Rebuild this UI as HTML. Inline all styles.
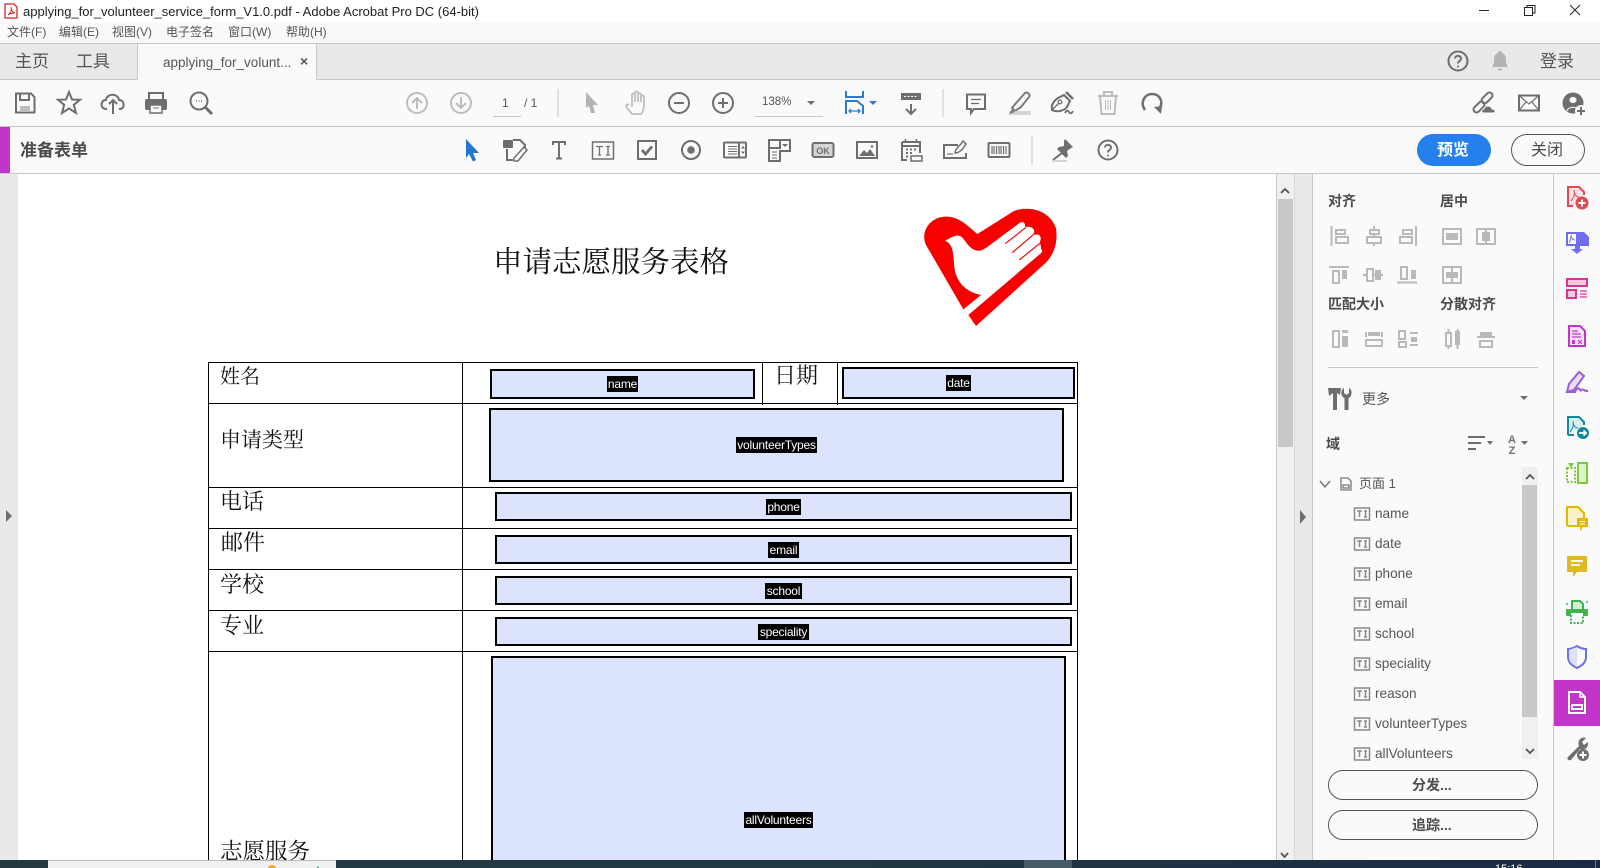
<!DOCTYPE html>
<html lang="zh"><head><meta charset="utf-8"><title>Acrobat</title>
<style>
html,body{margin:0;padding:0;width:1600px;height:868px;overflow:hidden;background:#fff}
body{position:relative;font-family:"Liberation Sans","Noto Sans CJK SC",sans-serif;color:#4b4b4b}
.b{position:absolute;box-sizing:border-box}
.t{position:absolute;white-space:nowrap;line-height:1}
.l{position:absolute;background:#000}
.f{position:absolute;box-sizing:border-box;border:2px solid #000;background:#dce3fd}
.g{position:absolute;background:#000;color:#fff;font-size:12px;line-height:16px;height:16px;overflow:hidden;text-align:center;font-family:"Liberation Sans",sans-serif;letter-spacing:-.2px}
.c{position:absolute;white-space:nowrap;line-height:1;font-family:"Liberation Serif","Noto Serif CJK SC",serif;color:#111;font-size:21px}
.m{font-size:12px;top:26px;color:#555}
.h{font-size:14px;font-weight:700;color:#4b4b4b}
.i{font-size:13.6px;color:#555;left:1375px}
svg{position:absolute;left:0;top:0}
</style></head><body>
<div class="b" style="left:0;top:0;width:1600px;height:23px;background:#fff"></div>
<div class="b" style="left:0;top:23px;width:1600px;height:20px;background:#f9f9f9"></div>
<div class="b" style="left:0;top:43px;width:1600px;height:37px;background:#e9e9e9;border-top:1px solid #c8c8c8;border-bottom:1px solid #c8c8c8"></div>
<div class="b" style="left:137px;top:43px;width:180px;height:37px;background:#fafafa;border:1px solid #c8c8c8;border-bottom:none"></div>
<div class="b" style="left:0;top:80px;width:1600px;height:47px;background:#fafafa;border-bottom:1px solid #c8c8c8"></div>
<div class="b" style="left:0;top:127px;width:1600px;height:47px;background:#fafafa;border-bottom:1px solid #c8c8c8"></div>
<div class="b" style="left:0;top:127px;width:10px;height:46px;background:#c136c9"></div>

<div class="b" style="left:0;top:174px;width:18px;height:686px;background:#e9e9e9"></div>
<div class="b" style="left:1276px;top:174px;width:19px;height:686px;background:#f0f0f0;border-left:1px solid #c8c8c8"></div>
<div class="b" style="left:1278px;top:199px;width:15px;height:248px;background:#c8c8c8"></div>
<div class="b" style="left:1294px;top:174px;width:18px;height:686px;background:#e9e9e9;border-left:1px solid #d8d8d8"></div>
<div class="b" style="left:1312px;top:174px;width:242px;height:686px;background:#fafafa;border-left:1px solid #c8c8c8;border-right:1px solid #c8c8c8"></div>
<div class="b" style="left:1554px;top:174px;width:46px;height:686px;background:#fafafa"></div>
<div class="b" style="left:1554px;top:680px;width:46px;height:46px;background:#c136c9"></div>
<div class="b" style="left:1328px;top:367px;width:210px;height:1px;background:#c8c8c8"></div>
<div class="b" style="left:1522px;top:467px;width:16px;height:292px;background:#f0f0f0"></div>
<div class="b" style="left:1522px;top:485px;width:15px;height:232px;background:#c8c8c8"></div>
<div class="b" style="left:1417px;top:134px;width:74px;height:32px;background:#2680eb;border-radius:16px"></div>
<div class="b" style="left:1511px;top:134px;width:74px;height:32px;background:#fafafa;border:1.5px solid #555;border-radius:16px"></div>
<div class="b" style="left:1328px;top:770px;width:210px;height:30px;border:1.5px solid #555;border-radius:15px"></div>
<div class="b" style="left:1328px;top:810px;width:210px;height:30px;border:1.5px solid #555;border-radius:15px"></div>

<!-- title text -->
<div class="t" style="left:23px;top:5px;font-size:13px;color:#222">applying_for_volunteer_service_form_V1.0.pdf - Adobe Acrobat Pro DC (64-bit)</div>
<div class="t m" style="left:7px">文件(F)</div>
<div class="t m" style="left:59px">编辑(E)</div>
<div class="t m" style="left:112px">视图(V)</div>
<div class="t m" style="left:166px">电子签名</div>
<div class="t m" style="left:228px">窗口(W)</div>
<div class="t m" style="left:286px">帮助(H)</div>
<div class="t" style="left:15px;top:53px;font-size:17px;color:#555">主页</div>
<div class="t" style="left:76px;top:53px;font-size:17px;color:#555">工具</div>
<div class="t" style="left:163px;top:56px;font-size:13.5px;color:#555">applying_for_volunt...</div>
<div class="t" style="left:300px;top:54px;font-size:14px;font-weight:700;color:#555">×</div>
<div class="t" style="left:1540px;top:53px;font-size:17px;color:#555">登录</div>
<div class="t" style="left:502px;top:97px;font-size:12px;color:#555">1</div>
<div class="t" style="left:524px;top:97px;font-size:12px;color:#555">/ 1</div>
<div class="b" style="left:493px;top:116px;width:28px;height:1px;background:#c8c8c8"></div>
<div class="t" style="left:762px;top:97px;font-size:11.5px;color:#555">138%</div>
<div class="b" style="left:755px;top:116px;width:68px;height:1px;background:#c8c8c8"></div>
<div class="t" style="left:20px;top:142px;font-size:17px;font-weight:700;color:#4b4b4b">准备表单</div>
<div class="t" style="left:1437px;top:143px;font-size:16px;font-weight:700;color:#fff">预览</div>
<div class="t" style="left:1531px;top:143px;font-size:16px;color:#4b4b4b">关闭</div>

<!-- document -->
<div class="c" style="left:493px;top:249px;font-size:29.5px;color:#111">申请志愿服务表格</div>
<div class="l" style="left:208px;top:362px;width:870px;height:1px"></div>
<div class="l" style="left:208px;top:403px;width:870px;height:1px"></div>
<div class="l" style="left:208px;top:487px;width:870px;height:1px"></div>
<div class="l" style="left:208px;top:528px;width:870px;height:1px"></div>
<div class="l" style="left:208px;top:569px;width:870px;height:1px"></div>
<div class="l" style="left:208px;top:610px;width:870px;height:1px"></div>
<div class="l" style="left:208px;top:651px;width:870px;height:1px"></div>
<div class="l" style="left:208px;top:362px;width:1px;height:498px"></div>
<div class="l" style="left:462px;top:362px;width:1px;height:498px"></div>
<div class="l" style="left:762px;top:362px;width:1px;height:43px"></div>
<div class="l" style="left:837px;top:362px;width:1px;height:43px"></div>
<div class="l" style="left:1077px;top:362px;width:1px;height:498px"></div>

<div class="c" style="left:220px;top:367px;font-size:20px">姓名</div>
<div class="c" style="left:220px;top:430px">申请类型</div>
<div class="c" style="left:220px;top:491px;font-size:22px">电话</div>
<div class="c" style="left:221px;top:532px;font-size:22px">邮件</div>
<div class="c" style="left:220px;top:574px;font-size:22px">学校</div>
<div class="c" style="left:220px;top:615px;font-size:22px">专业</div>
<div class="c" style="left:774px;top:365px;font-size:22px">日期</div>
<div style="position:absolute;left:0;top:800px;width:400px;height:60px;overflow:hidden"><div class="c" style="left:220px;top:41px;font-size:22.5px">志愿服务</div></div>

<div class="f" style="left:490px;top:369px;width:265px;height:30px"></div>
<div class="f" style="left:842px;top:367px;width:233px;height:32px"></div>
<div class="f" style="left:489px;top:408px;width:575px;height:74px"></div>
<div class="f" style="left:495px;top:492px;width:577px;height:29px"></div>
<div class="f" style="left:495px;top:535px;width:577px;height:29px"></div>
<div class="f" style="left:495px;top:576px;width:577px;height:29px"></div>
<div class="f" style="left:495px;top:617px;width:577px;height:29px"></div>
<div class="b" style="left:491px;top:656px;width:575px;height:204px;border:2px solid #000;border-bottom:none;background:#dce3fd"></div>
<div class="g" style="left:607px;top:376px;width:31px">name</div>
<div class="g" style="left:946px;top:375px;width:25px">date</div>
<div class="g" style="left:736px;top:437px;width:81px">volunteerTypes</div>
<div class="g" style="left:766px;top:499px;width:35px">phone</div>
<div class="g" style="left:768px;top:542px;width:31px">email</div>
<div class="g" style="left:765px;top:583px;width:37px">school</div>
<div class="g" style="left:758px;top:624px;width:51px">speciality</div>
<div class="g" style="left:744px;top:812px;width:69px">allVolunteers</div>

<!-- right panel text -->
<div class="t h" style="left:1328px;top:194px">对齐</div>
<div class="t h" style="left:1440px;top:194px">居中</div>
<div class="t h" style="left:1328px;top:297px">匹配大小</div>
<div class="t h" style="left:1440px;top:297px">分散对齐</div>
<div class="t" style="left:1362px;top:392px;font-size:14px;color:#555">更多</div>
<div class="t h" style="left:1326px;top:437px">域</div>
<div class="t" style="left:1359px;top:477px;font-size:13px;color:#555">页面 1</div>
<div class="t i" style="top:507px">name</div>
<div class="t i" style="top:537px">date</div>
<div class="t i" style="top:567px">phone</div>
<div class="t i" style="top:597px">email</div>
<div class="t i" style="top:627px">school</div>
<div class="t i" style="top:657px">speciality</div>
<div class="t i" style="top:687px">reason</div>
<div class="t i" style="top:717px">volunteerTypes</div>
<div class="t i" style="top:747px">allVolunteers</div>
<div class="t" style="left:1412px;top:778px;font-size:14px;font-weight:700;color:#4b4b4b">分发...</div>
<div class="t" style="left:1412px;top:818px;font-size:14px;font-weight:700;color:#4b4b4b">追踪...</div>

<svg width="1600" height="868" viewBox="0 0 1600 868" fill="none">
<!-- app icon -->
<g transform="translate(11,11)"><path d="M-6 -7H3L6 -4V7H-6Z" stroke="#d8232a" stroke-width="1.3" fill="#fff"/><path d="M-3 4C0 1 1 -1 0 -4C0 -1 2 2 4 2C2 2 -1 2 -3 4Z" stroke="#d8232a" stroke-width="1"/></g>
<!-- window -->
<path d="M1479 10.500H1489" stroke="#222"/>
<path d="M1524.500 7.500H1532.500V15.500H1524.500ZM1527 7V5.500H1535V13H1533" stroke="#222"/>
<path d="M1570 5L1580 15M1580 5L1570 15" stroke="#222"/>
<!-- tab row -->
<g transform="translate(1458,61)" stroke="#6e6e6e"><circle r="9.500" stroke-width="2"/><path d="M-3 -2.500C-3 -6 3 -6 3 -2.500C3 0 0 0 0 2.500" stroke-width="2"/><circle cy="5.500" r="1" fill="#6e6e6e" stroke="none"/></g>
<g transform="translate(1500,61)" fill="#b4b4b4"><path d="M-8 6C-6 3 -6 1 -6 -2C-6 -6 -3 -8 -1.500 -8.500C-1.500 -11 1.500 -11 1.500 -8.500C3 -8 6 -6 6 -2C6 1 6 3 8 6Z"/><path d="M-2.500 7.500H2.500C2 10.500 -2 10.500 -2.500 7.500Z"/></g>

<!-- toolbar 1 -->
<g stroke="#6e6e6e" stroke-width="2">
<g transform="translate(25,103)"><path d="M-9 -9.500H6L9.500 -6V9.500H-9Z"/><path d="M-5 -9.500V-3H4V-9.500"/><rect x="-5" y="3" width="10" height="6" fill="#bdbdbd" stroke="none"/></g>
<g transform="translate(69,103)"><path d="M0 -11L3 -3.500L11 -3.200L4.800 1.800L7 10L0 5.500L-7 10L-4.800 1.800L-11 -3.200L-3 -3.500Z"/></g>
<g transform="translate(113,103)"><path d="M-6 6H-7C-13 6 -13 -3 -7 -3C-6 -10 5 -10 6 -3C12 -3 12 6 7 6H6"/><path d="M0 11V-3M-4 1L0 -3L4 1"/></g>
<g transform="translate(156,103)"><path d="M-7 -4V-10H7V-4"/><rect x="-11" y="-4" width="22" height="11" rx="2" fill="#6e6e6e" stroke="none"/><rect x="-6" y="2" width="12" height="8" fill="#fafafa" stroke-width="1.500"/><path d="M-3 5H3" stroke-width="1"/></g>
<g transform="translate(201,103)"><circle cx="-2" cy="-2" r="8.500"/><path d="M4 4L11 11" stroke-width="3"/><path d="M-5 -2H-4M-2.500 -2H-1.500M0 -2H1" stroke-width="1.500"/></g>
<g transform="translate(679,103)"><circle r="10"/><path d="M-5 0H5"/></g>
<g transform="translate(723,103)"><circle r="10"/><path d="M-5 0H5M0 -5V5"/></g>
<path d="M911 104V114M906 109L911 114L916 109"/>
<rect x="901" y="93" width="20" height="7" fill="#6e6e6e" stroke="none"/>
<path d="M904 96.500H918" stroke="#fafafa" stroke-width="1" stroke-dasharray="2 1.500"/>
<g transform="translate(976,103)"><path d="M-9 -8.500H9V6H-2L-5 10V6H-9Z"/><path d="M-5 -3.500H5M-5 .500H3" stroke-width="1.300"/></g>
<g transform="translate(1062,103)"><path d="M-10 7C-11 1 -7 -3 -4 -5L2 -8L8 -2L5 4C3 7 -4 10 -10 7Z"/><path d="M-10 7L-3 0" stroke-width="1.300"/><circle cx="-2" cy="-1" r="1.800" stroke-width="1.300"/><path d="M4 -11L11 -4" stroke-width="2.500"/><path d="M3 10Q5 6 7 9T11 8" stroke-width="1.800"/></g>
<g transform="translate(1152,103)"><path d="M-7 7C-12 0 -8 -9 0 -9C8 -9 12 -1 7 6" stroke-width="2.500"/><path d="M2 4L10 3L9 11Z" fill="#6e6e6e" stroke="none"/></g>
<g transform="translate(1485,103)"><rect x="-6.500" y="-3" width="13" height="6" rx="3" transform="translate(-6,4) rotate(-45)"/><rect x="-6.500" y="-3" width="13" height="6" rx="3" transform="translate(2,-5) rotate(-45)"/><path d="M-1 10C-4 10 -4 6 -1 6C0 2 6 2 7 6C11 6 11 10 8 10Z" fill="#6e6e6e" stroke="#fafafa" stroke-width="1"/></g>
<g transform="translate(1529,103)"><rect x="-10" y="-7.500" width="20" height="15"/><path d="M-10 -7.500L0 1L10 -7.500M-10 7.500L-3 -1M10 7.500L3 -1" stroke-width="1.200"/></g>
<g transform="translate(1574,103)"><circle cx="-1" r="10.500" fill="#6e6e6e" stroke="none"/><path d="M-4.500 -3C-4.500 -7 2.500 -7 2.500 -3C2.500 1 -4.500 1 -4.500 -3Z" fill="#fafafa" stroke="none"/><path d="M-7 8C-6 3 4 3 5 8" stroke="#fafafa" stroke-width="1" fill="none"/><circle cx="7" cy="8" r="6" fill="#fafafa" stroke="none"/><path d="M3 8H11M7 4V12"/></g>
</g>
<g stroke="#bdbdbd" stroke-width="2">
<g transform="translate(417,103)"><circle r="10"/><path d="M0 6V-5M-5 0L0 -5L5 0"/></g>
<g transform="translate(461,103)"><circle r="10"/><path d="M0 -6V5M-5 0L0 5L5 0"/></g>
<g transform="translate(635,103)"><path d="M-6 2C-8 0 -10 3 -8 5L-3 11H6C9 8 9 4 9 -6C9 -8 6 -8 6 -6V-1M6 -1V-8C6 -10 3 -10 3 -8V-1M3 -1V-10C3 -12 0 -12 0 -10V-1M0 -1V-8C0 -10 -3 -10 -3 -8V4" stroke-width="1.700"/></g>
<g transform="translate(1108,103)"><path d="M-10 -7H10M-4 -7V-11H4V-7"/><path d="M-8 -7L-6.500 11H6.500L8 -7"/><path d="M-2.500 -3V7M0 -3V7M2.500 -3V7" stroke-width="1"/></g>
</g>
<path d="M558 89V117M943 89V117M1032 135V165" stroke="#c8c8c8" stroke-width="1"/>
<path d="M586 92L598 105L593 105L595 113L591 113L589 106L586 108Z" fill="#b4b4b4"/>
<path d="M807 101H815L811 105Z" fill="#6e6e6e"/>
<g transform="translate(854,103)" stroke="#2d7ad6" stroke-width="2"><path d="M-8 -12V-6H9V-12"/><path d="M-8 11V-2H3L9 3V11"/><path d="M-5 8H6M-3 6L-5 8L-3 10M4 6L6 8L4 10" stroke-width="1.300"/></g>
<path d="M869 101H877L873 105Z" fill="#2d7ad6"/>
<g transform="translate(1020,103)"><path d="M-8 5L-3 -1L5 -10C7 -12 11 -8 9 -6L1 4L-5 8Z" stroke="#7a7a7a" stroke-width="2"/><rect x="-11" y="8" width="22" height="4" fill="#d5d5d5"/><path d="M-11 11L-8 6L-5 9Z" fill="#7a7a7a"/></g>

<!-- toolbar 2 -->
<path d="M466 139L479 153L473 153L476 160L473 161.500L469 154L466 158Z" fill="#2176cf"/>
<g stroke="#6e6e6e" stroke-width="2">
<g transform="translate(515,150)"><path d="M-2 -10H5L10 -5V-2"/><rect x="-12" y="-10" width="10" height="8" rx="1" fill="#6e6e6e" stroke="none"/><path d="M-8 -1V10H-2"/><path d="M-1 8L9 -3L12 0L3 11L-1 11Z" stroke-width="1.500"/></g>
<g transform="translate(559,150)"><path d="M-6 -5V-8H6V-5M0 -8V8M-3 8.500H3"/></g>
<g transform="translate(603,150)"><rect x="-10.500" y="-8" width="21" height="17" stroke-width="1.500"/><path d="M-7 -3.500H0M-3.500 -3.500V5M-5 5H-2M3 -3.500H7M5 -3.500V5M3 5H7" stroke-width="1.300"/></g>
<g transform="translate(647,150)"><rect x="-9" y="-9" width="18" height="18"/><path d="M-5 0L-1.500 4L5 -3.500" stroke-width="2.800"/></g>
<g transform="translate(691,150)"><circle r="9"/><circle r="3.800" fill="#6e6e6e" stroke="none"/></g>
<g transform="translate(735,150)"><rect x="-11" y="-7.500" width="22" height="15" rx="1"/><path d="M-7 -3.500H2M-7 -1H2M-7 1.500H2M-7 4H2" stroke-width="1"/><path d="M4 -7V7"/><path d="M6 -1.500L8 -4L10 -1.500ZM6 1.500L8 4L10 1.500Z" fill="#6e6e6e" stroke="none"/></g>
<g transform="translate(779,150)"><path d="M-10 -10H11V1H1V11H-10ZM-10 -2H1V-10"/><path d="M3 -6H9L6 -3Z" fill="#6e6e6e" stroke="none"/><path d="M-7 2H-2M-7 5H-2M-7 8H-2" stroke-width="1"/></g>
<g transform="translate(823,150)"><rect x="-10.500" y="-7" width="21" height="14" rx="2" fill="#d5d5d5"/></g>
<g transform="translate(867,150)"><rect x="-10" y="-8" width="20" height="16"/><path d="M-8 6L-3 0L0 3L3 -1L8 6Z" fill="#6e6e6e" stroke="none"/><path d="M5 -5V-2M3.500 -3.500H6.500" stroke-width="1"/></g>
<g transform="translate(911,150)"><path d="M-9 -8H9V3M-4 10H-9V-8"/><path d="M-9 -4H9"/><path d="M-5.500 -11V-7M5.500 -11V-7" stroke-width="1.500"/><path d="M-5 -0.500H-3M-1 -0.500H1M3 -0.500H5M-5 3H-3M-1 3H1M-5 6.500H-3" stroke-width="2"/><rect x="0" y="6" width="11" height="5" fill="#fafafa" stroke-width="1.500"/></g>
<g transform="translate(955,150)"><path d="M3 -5H-11V8H11V3"/><path d="M-8 4H-2" stroke-width="1.200"/><path d="M0 3C0 -1 4 -4 6 -6L8 -9L11 -6L9 -3C7 0 4 3 0 3Z" stroke-width="1.500"/></g>
<g transform="translate(999,150)"><rect x="-10.500" y="-7" width="21" height="14" rx="1"/><path d="M-7 -4V4M-5 -4V4M-2.500 -4V4M0 -4V4M2 -4V4M4.500 -4V4M7 -4V4" stroke-width="1.200"/></g>
<g transform="translate(1108,150)"><circle r="9.500"/><path d="M-3 -2.500C-3 -6 3 -6 3 -2.500C3 0 0 0 0 2.500"/><circle cy="5.500" r="1" fill="#6e6e6e" stroke="none"/></g>
</g>
<text x="823" y="154" font-family="Liberation Sans" font-size="9" font-weight="700" fill="#6e6e6e" text-anchor="middle">OK</text>
<g transform="translate(1063,150)"><path d="M2 -11L10 -3L8 -2L4 1L5 6L3 8L-6 -1L-4 -3L1 -4L1 -9Z" fill="#6e6e6e"/><path d="M-1 3L-10 10" stroke="#6e6e6e" stroke-width="2"/><rect x="-11" y="10" width="15" height="2" fill="#d5d5d5"/></g>

<!-- align icons -->
<g stroke="#b9b9b9" stroke-width="2" fill="#fafafa">
<path d="M1331.500 226V246" />
<rect x="1336" y="230" width="9" height="4"/><rect x="1336" y="237" width="12" height="6"/>
<path d="M1374 226V246"/>
<rect x="1370" y="230" width="9" height="4"/><rect x="1367" y="237" width="14" height="6"/>
<path d="M1416 226V246"/>
<rect x="1403" y="230" width="9" height="4"/><rect x="1400" y="237" width="12" height="6"/>
<rect x="1443" y="229" width="18" height="15"/><rect x="1446" y="233" width="12" height="7" fill="#b9b9b9" stroke="none"/>
<path d="M1477 229H1495V244H1477ZM1486 229V244"/><rect x="1482" y="232" width="8" height="9" fill="#b9b9b9" stroke="none"/>
<path d="M1329 267H1349"/><rect x="1333" y="271" width="6" height="12"/><rect x="1342" y="270" width="5" height="9" fill="#b9b9b9" stroke="none"/>
<path d="M1363 275H1383"/><rect x="1367" y="269" width="6" height="12"/><rect x="1375" y="270" width="6" height="10" fill="#b9b9b9" stroke="none"/>
<path d="M1397 282.500H1417"/><rect x="1401" y="267" width="6" height="12"/><rect x="1411" y="270" width="5" height="9" fill="#b9b9b9" stroke="none"/>
<path d="M1443 267H1461V283H1443ZM1452 267V283"/><rect x="1446" y="272" width="12" height="6" fill="#b9b9b9" stroke="none"/>
<rect x="1333" y="331" width="6" height="16"/><rect x="1342" y="330" width="6" height="3" fill="#b9b9b9" stroke="none"/><rect x="1342" y="336" width="6" height="11" fill="#b9b9b9" stroke="none"/>
<path d="M1366 332V337M1382 332V337"/><rect x="1368" y="332" width="12" height="4" fill="#b9b9b9" stroke="none"/><rect x="1366" y="340" width="16" height="6"/>
<path d="M1399 331H1405V339H1399ZM1399 342H1406V347H1399Z"/><path d="M1410 333H1418M1410 345H1418" /><rect x="1411" y="337" width="6" height="5" fill="#b9b9b9" stroke="none"/>
<path d="M1448.500 329V349"/><rect x="1446" y="333" width="5" height="13"/><path d="M1457.500 329V349"/><rect x="1455" y="331" width="5" height="14" fill="#b9b9b9" stroke="none"/>
<path d="M1477 337H1495"/><rect x="1480" y="332" width="12" height="4" fill="#b9b9b9" stroke="none"/><rect x="1480" y="341" width="12" height="6"/>
</g>
<!-- tools icon -->
<g fill="#6e6e6e"><path d="M1328 388H1341L1340 395L1337 393V410H1333V393L1329 396Z"/><path d="M1344 388V393L1346.500 395L1349 393V388C1353 390 1352 397 1348.500 398V410H1344.500V398C1341 397 1340 390 1344 388Z"/></g>
<path d="M1520 396H1528L1524 400Z" fill="#6e6e6e"/>
<!-- sort icons -->
<path d="M1468 437H1485M1468 443H1481M1468 449H1476" stroke="#6e6e6e" stroke-width="2"/>
<path d="M1487 441H1493L1490 445Z M1521 441H1528L1524.500 445Z" fill="#6e6e6e"/>
<text x="1512" y="443" font-family="Liberation Sans" font-size="11" font-weight="700" fill="#6e6e6e" text-anchor="middle">A</text>
<text x="1512" y="454" font-family="Liberation Sans" font-size="11" font-weight="700" fill="#6e6e6e" text-anchor="middle">Z</text>
<!-- tree -->
<path d="M1320 481L1325 487L1330 481" stroke="#777" stroke-width="1.500"/>
<g transform="translate(1346,484)" stroke="#7a7a7a" stroke-width="1.300"><path d="M-5 -6H2L5 -3V6H-5Z"/><rect x="-3" y="1" width="6" height="3"/></g>
<g stroke="#8a8a8a" stroke-width="1.500">
<g transform="translate(1362,514)"><rect x="-7.500" y="-6" width="15" height="12"/><path d="M-5 -3H0M-2.500 -3V3M2 -3H5M3.500 -3V3M2 3H5" /></g>
<g transform="translate(1362,544)"><rect x="-7.500" y="-6" width="15" height="12"/><path d="M-5 -3H0M-2.500 -3V3M2 -3H5M3.500 -3V3M2 3H5" /></g>
<g transform="translate(1362,574)"><rect x="-7.500" y="-6" width="15" height="12"/><path d="M-5 -3H0M-2.500 -3V3M2 -3H5M3.500 -3V3M2 3H5" /></g>
<g transform="translate(1362,604)"><rect x="-7.500" y="-6" width="15" height="12"/><path d="M-5 -3H0M-2.500 -3V3M2 -3H5M3.500 -3V3M2 3H5" /></g>
<g transform="translate(1362,634)"><rect x="-7.500" y="-6" width="15" height="12"/><path d="M-5 -3H0M-2.500 -3V3M2 -3H5M3.500 -3V3M2 3H5" /></g>
<g transform="translate(1362,664)"><rect x="-7.500" y="-6" width="15" height="12"/><path d="M-5 -3H0M-2.500 -3V3M2 -3H5M3.500 -3V3M2 3H5" /></g>
<g transform="translate(1362,694)"><rect x="-7.500" y="-6" width="15" height="12"/><path d="M-5 -3H0M-2.500 -3V3M2 -3H5M3.500 -3V3M2 3H5" /></g>
<g transform="translate(1362,724)"><rect x="-7.500" y="-6" width="15" height="12"/><path d="M-5 -3H0M-2.500 -3V3M2 -3H5M3.500 -3V3M2 3H5" /></g>
<g transform="translate(1362,754)"><rect x="-7.500" y="-6" width="15" height="12"/><path d="M-5 -3H0M-2.500 -3V3M2 -3H5M3.500 -3V3M2 3H5" /></g>
</g>
<!-- scroll arrows -->
<path d="M1526 479L1530 475L1534 479M1526 749L1530 753L1534 749" stroke="#555" stroke-width="1.800"/>
<path d="M1281 193L1285 189L1289 193M1281 853L1284.500 857L1288 853" stroke="#555" stroke-width="1.800"/>
<path d="M6 510L12 516L6 522Z M1300 510L1306 517L1300 524Z" fill="#6e6e6e"/>

<!-- right strip -->
<g transform="translate(1577,197)"><path d="M-4 9H-9V-10H2L7 -5V-2" stroke="#e34850" stroke-width="2" fill="#fbe3e4"/><path d="M-6 4C-3 0 -2 -3 -3 -7C-3 -3 -1 0 2 0" stroke="#e34850" stroke-width="1"/><circle cx="5" cy="6" r="6.500" fill="#e34850"/><path d="M1.500 6H8.500M5 2.500V9.500" stroke="#fff" stroke-width="2"/></g>
<g transform="translate(1577,243)"><path d="M-10 -10H0V2H-10Z" stroke="#6e6eef" stroke-width="2" fill="#fff"/><path d="M0 -11H7L12 -6V3H0Z" fill="#6e6eef"/><path d="M-2 3H3V6H6L0 11L-6 6H-2Z" fill="#6e6eef"/><path d="M-8 0C-6 -3 -6 -5 -6 -8C-6 -5 -4 -3 -2 -3" stroke="#6e6eef" stroke-width="1"/></g>
<g transform="translate(1577,288)" stroke="#d83790" stroke-width="2"><rect x="-10" y="-9" width="20" height="7" fill="#f3c9e0"/><rect x="-10" y="2" width="9" height="8" fill="#f3c9e0"/><path d="M3 3H10M3 6H10M3 9H10" stroke-width="1.200"/></g>
<g transform="translate(1577,336)" stroke="#c136c9" stroke-width="2"><path d="M-8 -10H3L8 -5V10H-8Z" fill="#f7e2f8"/><path d="M-5 -5H1M-5 -2H4M-5 1H4" stroke-width="1.200"/><rect x="-5" y="4" width="3" height="4" fill="#c136c9" stroke="none"/><path d="M1 4L5 8M5 4L1 8" stroke-width="1.200"/></g>
<g transform="translate(1577,382)" stroke="#9a5ed6" stroke-width="2"><path d="M-10 10L-8 2L2 -10L7 -6L-3 8Z" fill="#e9dcf7"/><path d="M-10 10H-2C0 6 2 5 3 8C4 10 5 6 7 8C8 9 9 9 11 9"/></g>
<g transform="translate(1577,427)"><path d="M-9 8V-10H2L7 -5V-2M-9 8H-3" stroke="#12899a" stroke-width="2" fill="#d9f0f2"/><path d="M-7 5C-4 1 -3 -2 -4 -6C-4 -2 -2 1 1 1" stroke="#12899a" stroke-width="1"/><circle cx="6" cy="6" r="6" fill="#12899a"/><path d="M2 6H9M6.500 3.500L9 6L6.500 8.500" stroke="#fff" stroke-width="1.800"/></g>
<g transform="translate(1577,473)" stroke="#7cc93e" stroke-width="2"><rect x="1" y="-10" width="9" height="20" fill="#def3cd"/><path d="M-10 -5H-2V9H-10Z" stroke-dasharray="2 1.500"/><path d="M-9 -10L-3 -10L-6 -5Z" fill="#7cc93e" stroke="none"/></g>
<g transform="translate(1577,518)"><path d="M-10 8V-11H1L7 -5V1" stroke="#e5b800" stroke-width="2" fill="#f8f1cc"/><path d="M-10 8H0" stroke="#e5b800" stroke-width="2"/><path d="M0 0H11V9H6L3 13V9H0Z" fill="#e5b800"/><path d="M3 3.500H8M3 6H8" stroke="#fff" stroke-width="1"/></g>
<g transform="translate(1577,565)"><path d="M-10 -9H10V7H0L-4 12V7H-10Z" fill="#e0b92a"/><path d="M-6 -4H6M-6 0H3" stroke="#fff" stroke-width="1.800"/></g>
<g transform="translate(1577,611)"><path d="M-5 -1V-10H3L6 -7V-1" stroke="#3fb34f" stroke-width="2" fill="#d5efd8"/><rect x="-11" y="-2" width="22" height="7" rx="1" fill="#3fb34f"/><rect x="-6" y="2" width="12" height="3" fill="#fff"/><path d="M-6 4V12H6V4" stroke="#3fb34f" stroke-width="2" stroke-dasharray="2 1.500"/><path d="M9 -9H11M-11 -7H-9" stroke="#3fb34f" stroke-width="1.500"/></g>
<g transform="translate(1577,657)"><path d="M0 -11C3 -9 6 -8 9 -8V0C9 6 4 9 0 11C-4 9 -9 6 -9 0V-8C-6 -8 -3 -9 0 -11Z" stroke="#6e6eef" stroke-width="2"/><path d="M-8 -7L0 -10V10C-4 8 -8 5 -8 0Z" fill="#dfe0fb"/></g>
<g transform="translate(1577,703)" stroke="#fff" stroke-width="2"><path d="M-8 -11H3L8 -6V10H-8Z"/><path d="M3 -11V-6H8" stroke-width="1.500"/><rect x="-5" y="2" width="10" height="4"/></g>
<g transform="translate(1577,749)"><path d="M-9 8L2 -3C0 -8 4 -13 9 -11L5 -7L7 -4L11 -7C12 -2 8 2 3 0L-6 11C-8 12 -11 10 -9 8Z" fill="#6e6e6e"/><circle cx="6" cy="6" r="6" fill="#6e6e6e"/><path d="M2.500 6H9.500M6 2.500V9.500" stroke="#fff" stroke-width="2"/></g>

<!-- heart logo -->
<g transform="translate(900,200) scale(.33333)">
<path d="M190 328L78 135C60 95 90 52 135 50C175 48 200 75 232 102L340 34C385 15 450 30 468 85C475 130 460 170 430 195L228 378L205 345Z" fill="#f60000"/>
<path d="M135 122C150 115 165 103 180 108C195 112 205 155 240 152C250 150 260 142 270 135L360 68Q375 62 375 78L378 81Q395 78 402 90Q404 98 398 104L416 104Q426 112 420 125L424 148Q430 155 420 162L205 345L190 328L243 285C200 275 165 250 162 190C160 150 155 130 135 122Z" fill="#fff"/>
<path d="M316 131L378 82M337 158L400 104M358 180L422 128" stroke="#f60000" stroke-width="3.500"/>
</g>

<!-- taskbar -->
<defs><linearGradient id="tb" x1="0" x2="1" y1="0" y2="0"><stop offset="0" stop-color="#22393f"/><stop offset=".5" stop-color="#203a44"/><stop offset="1" stop-color="#1a2a44"/></linearGradient></defs>
<rect x="0" y="860" width="1600" height="8" fill="url(#tb)"/>
<rect x="48" y="860" width="288" height="8" fill="#f0f0f0"/>
<rect x="48" y="860" width="288" height="1" fill="#bbb"/>
<rect x="1024" y="860" width="48" height="8" fill="#465a68"/>
<circle cx="272" cy="870" r="5" fill="#f2b21c"/>
<path d="M318 866L315 870H320Z" fill="#2fa36b"/>
<rect x="1595" y="860" width="1" height="8" fill="#6e7a88"/>
<text x="1495" y="872" font-family="Liberation Sans" font-size="11" fill="#fff">15:16</text>
</svg>
</body></html>
